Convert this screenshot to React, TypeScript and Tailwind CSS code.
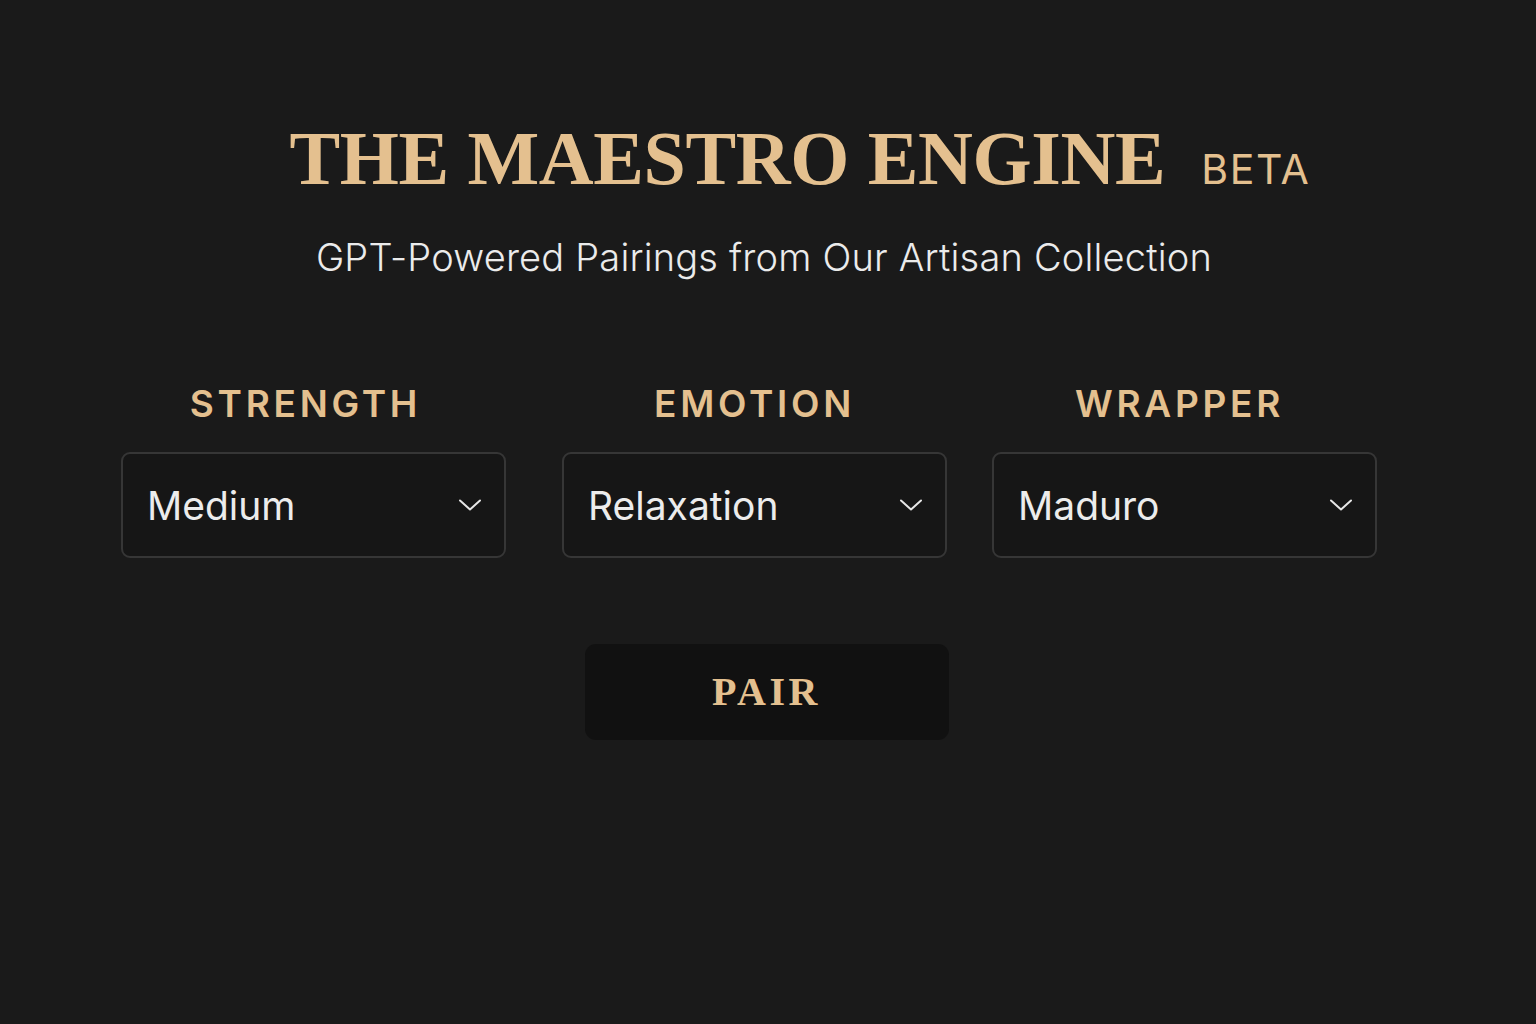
import React, { useState } from 'react';

const GOLD = 'text-[#e4c08f]';

const Chevron = () => (
  <svg width="24" height="24" viewBox="0 0 24 24" fill="none" stroke="#e6e6e6" strokeWidth="2" strokeLinecap="round" strokeLinejoin="round">
    <path d="M2 7.5l10 9 10-9" />
  </svg>
);

interface FieldProps {
  label: string;
  value: string;
  className?: string;
  labelClass?: string;
}

const Field: React.FC<FieldProps> = ({ label, value, className, labelClass }) => (
  <div className={`flex flex-col items-center w-[385px] ${className ?? ''}`}>
    <div className={`${GOLD} text-[37px] leading-none font-semibold tracking-[0.1em] h-[37px] flex items-center ${labelClass ?? ''}`}>
      {label}
    </div>
    <button
      type="button"
      className="mt-[30px] w-full h-[106px] rounded-[9px] border-2 border-[#363636] bg-[#161616] flex items-center justify-between pl-[24px] pr-[22px]"
    >
      <span className="text-[39px] leading-none text-[#ececec]">{value}</span>
      <Chevron />
    </button>
  </div>
);

export default function App() {
  const [picks] = useState({ strength: 'Medium', emotion: 'Relaxation', wrapper: 'Maduro' });

  return (
    <div className="min-h-[1024px] w-full bg-[#1a1a1a] font-['Inter','Noto_Sans',sans-serif]">
      <div className="flex flex-col items-center pt-[120px]">
        <div className="flex items-baseline ml-[64px]">
          <h1 className={`${GOLD} font-['Liberation_Serif','Times_New_Roman',serif] font-bold text-[76px] leading-none tracking-[-0.005em]`}>
            THE MAESTRO ENGINE
          </h1>
          <span className={`${GOLD} ml-[36px] text-[41px] leading-none tracking-[0.04em]`}>BETA</span>
        </div>
        <p className="mt-[42px] ml-[-8px] text-[38px] leading-none text-[#ebebeb] font-light tracking-[0.005em]">
          GPT-Powered Pairings from Our Artisan Collection
        </p>
      </div>

      <div className="ml-[121px] mt-[109px] flex">
        <Field label="STRENGTH" value={picks.strength} labelClass="mr-[16px]" />
        <Field label="EMOTION" value={picks.emotion} className="ml-[56px]" />
        <Field label="WRAPPER" value={picks.wrapper} className="ml-[45px]" labelClass="mr-[10px]" />
      </div>

      <div className="flex justify-center mt-[86px]">
        <button
          type="button"
          className="ml-[-3px] w-[364px] h-[96px] rounded-[11px] bg-[#111111] flex items-center justify-center"
        >
          <span className={`${GOLD} font-['Liberation_Serif','Times_New_Roman',serif] font-bold text-[40px] leading-none tracking-[0.09em]`}>
            PAIR
          </span>
        </button>
      </div>
    </div>
  );
}
